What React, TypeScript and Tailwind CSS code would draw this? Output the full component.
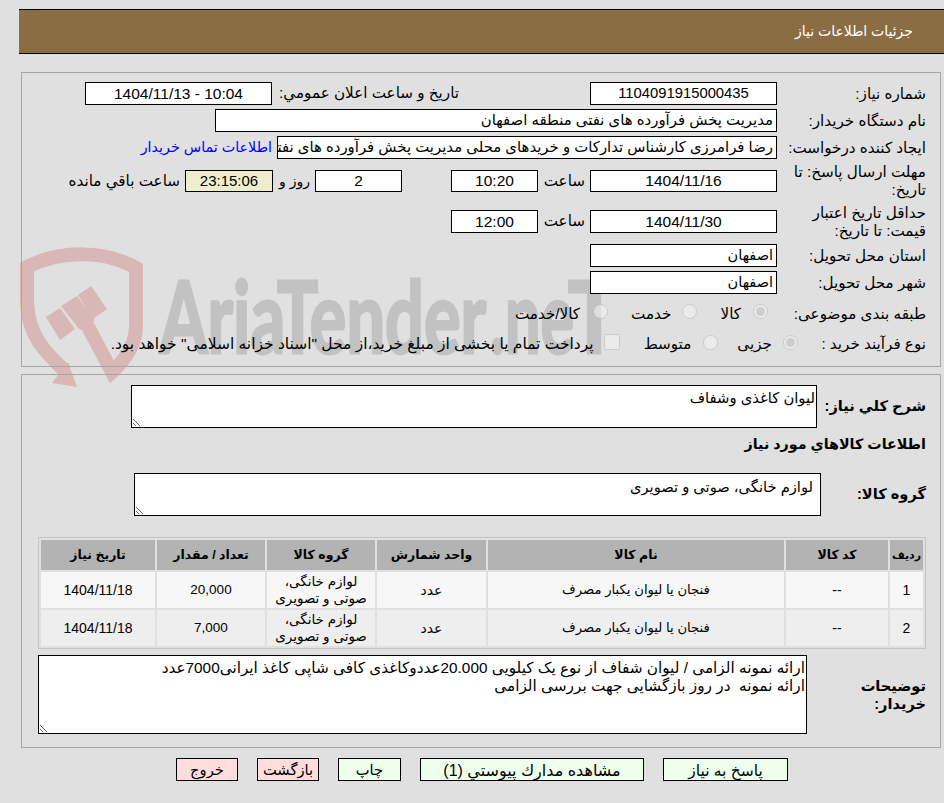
import React from 'react';

const Box: React.FC<{ className?: string; children?: React.ReactNode }> = ({ className = '', children }) => (
  <div className={`h-full shrink-0 border border-black bg-white text-[15.5px] flex items-center overflow-hidden whitespace-nowrap ${className}`}>
    {children}
  </div>
);

const Label: React.FC<{ children: React.ReactNode }> = ({ children }) => (
  <div className="w-[149px] shrink-0 leading-[18px]">{children}</div>
);

const NoteArea: React.FC<{ value: string; className?: string }> = ({ value, className = '' }) => (
  <textarea
    readOnly
    dir="rtl"
    value={value}
    className={`block shrink-0 border border-black bg-white text-black pb-0 leading-[18px] outline-none ${className}`}
  />
);

const Watermark = () => (
  <svg className="absolute left-0 top-[240px]" width="640" height="160" viewBox="0 240 640 160">
    <g fill="none" stroke="#d9b7b7" strokeWidth="14">
      <path d="M66 372 C45 352 27 335 27 300 L27 267 C60 250 105 250 136 268 L136 325 C136 345 125 360 112 372 L86 323" />
    </g>
    <g fill="#d9b7b7">
      <polygon points="46,317 60,308 75,329 60,340" />
      <polygon points="61,306 77,296 95,320 80,330" />
      <polygon points="78,295 91,286 107,309 93,319" />
      <polygon points="52,383 77,387 68,362" />
    </g>
    <g direction="ltr" textAnchor="start" fontFamily="Lato, sans-serif" fontWeight="700" fontSize="100" fill="#c2c2c2" stroke="#c2c2c2" strokeWidth="3">
      <text x="160" y="353" textLength="326" lengthAdjust="spacingAndGlyphs">AriaTender</text>
      <text x="490" y="353" textLength="84" lengthAdjust="spacingAndGlyphs">.ne</text>
      <text x="568" y="353" textLength="52" lengthAdjust="spacingAndGlyphs">T</text>
    </g>
  </svg>
);

const rows = [
  { id: 1, qty: '20,000', bg: 'bg-[#f7f7f7]' },
  { id: 2, qty: '7,000', bg: 'bg-[#eeeeee]' },
];

const description =
  'ارائه نمونه الزامی / لیوان شفاف از نوع یک کیلویی 20.000عددوکاغذی کافی شاپی کاغذ ایرانی7000عدد\nارائه نمونه  در روز بازگشایی جهت بررسی الزامی';

export default function App() {
  return (
    <div dir="rtl" className="relative min-h-[803px] overflow-hidden bg-[#e0e0e0] text-[15.2px] text-black font-['Liberation_Sans','DejaVu_Sans',sans-serif] pt-[9px]">
      <Watermark />

      <div className="relative ml-[19px] h-[45px] border-y border-black bg-[#8b6d43] flex items-center pr-[31px] text-[14px] text-white">
        جزئیات اطلاعات نیاز
      </div>

      <section className="relative ml-[21px] mr-[3px] mt-[18px] h-[295px] border border-[#a6a6a6] pr-[14px] pt-[9px]">
        <div className="flex items-center h-[23px]">
          <Label>شماره نیاز:</Label>
          <Box className="w-[187px] justify-center !text-[14.8px]">1104091915000435</Box>
          <div className="w-[318px] shrink-0 pr-[131px] whitespace-nowrap">تاریخ و ساعت اعلان عمومي:</div>
          <Box className="w-[187px] justify-center"><span dir="ltr">1404/11/13 - 10:04</span></Box>
        </div>
        <div className="flex items-center h-[23px] mt-[4px]">
          <Label>نام دستگاه خریدار:</Label>
          <Box className="w-[562px] px-[3px] !text-[14.9px]">مدیریت پخش فرآورده های نفتی منطقه اصفهان</Box>
        </div>
        <div className="flex items-center h-[23px] mt-[4px]">
          <Label>ایجاد کننده درخواست:</Label>
          <Box className="w-[500px] px-[3px] !text-[14.9px]">رضا فرامرزی کارشناس تدارکات و خریدهای محلی مدیریت پخش فرآورده های نفتی منطقه اصفهان</Box>
          <a className="mr-[5px] whitespace-nowrap text-[14.3px] text-[#0000ff]">اطلاعات تماس خریدار</a>
        </div>
        <div className="flex items-center h-[22px] mt-[11px]">
          <Label>مهلت ارسال پاسخ: تا تاریخ:</Label>
          <Box className="w-[187px] justify-center">1404/11/16</Box>
          <div className="w-[52px] shrink-0 pr-[5px]">ساعت</div>
          <Box className="w-[87px] justify-center">10:20</Box>
          <div className="w-[49px] shrink-0" />
          <Box className="w-[87px] justify-center">2</Box>
          <div className="w-[42px] shrink-0 pr-[5px] whitespace-nowrap text-[14px]">روز و</div>
          <Box className="w-[88px] justify-center !bg-[#eeeecc] !text-[15px]">23:15:06</Box>
          <div className="mr-[5px] whitespace-nowrap">ساعت باقي مانده</div>
        </div>
        <div className="flex items-center h-[23px] mt-[18px]">
          <Label>حداقل تاریخ اعتبار قیمت: تا تاریخ:</Label>
          <Box className="w-[187px] justify-center">1404/11/30</Box>
          <div className="w-[52px] shrink-0 pr-[5px]">ساعت</div>
          <Box className="w-[87px] justify-center">12:00</Box>
        </div>
        <div className="flex items-center h-[23px] mt-[11px]">
          <Label>استان محل تحویل:</Label>
          <Box className="w-[187px] px-[3px] !text-[14.5px]">اصفهان</Box>
        </div>
        <div className="flex items-center h-[23px] mt-[4px]">
          <Label>شهر محل تحویل:</Label>
          <Box className="w-[187px] px-[3px] !text-[14.5px]">اصفهان</Box>
        </div>
        <div className="flex items-center h-[22px] mt-[9px]">
          <Label>طبقه بندی موضوعی:</Label>
          <input type="radio" disabled defaultChecked className="m-0 mr-[9px] mb-[6px] w-[15px] h-[15px] opacity-80" />
          <span className="mr-[12px]">کالا</span>
          <input type="radio" disabled className="m-0 mr-[23px] mb-[6px] w-[15px] h-[15px] opacity-80" />
          <span className="mr-[11px]">خدمت</span>
          <input type="radio" disabled className="m-0 mr-[23px] mb-[6px] w-[15px] h-[15px] opacity-80" />
          <span className="mr-[13px] whitespace-nowrap">کالا/خدمت</span>
        </div>
        <div className="flex items-center h-[22px] mt-[8px]">
          <Label>نوع فرآیند خرید :</Label>
          <input type="radio" disabled defaultChecked className="m-0 mr-[-21px] mb-[4px] w-[15px] h-[15px] opacity-80" />
          <span className="mr-[11px]">جزیی</span>
          <input type="radio" disabled className="m-0 mr-[19px] mb-[4px] w-[15px] h-[15px] opacity-80" />
          <span className="mr-[12px]">متوسط</span>
          <input type="checkbox" disabled className="m-0 mr-[24px] mb-[4px] w-[16px] h-[16px] opacity-80" />
          <span className="mr-[10px] whitespace-nowrap text-[15.5px]">پرداخت تمام یا بخشی از مبلغ خرید،از محل "اسناد خزانه اسلامی" خواهد بود.</span>
        </div>
      </section>

      <section className="relative ml-[21px] mr-[3px] mt-[7px] h-[374px] border border-[#a6a6a6] pr-[14px] pt-[10px]">
        <div className="flex items-center">
          <div className="w-[109px] shrink-0 font-bold text-[14.6px]">شرح كلي نياز:</div>
          <NoteArea value="لیوان کاغذی وشفاف" className="w-[686px] h-[43px] px-[1px] pt-[3px] text-[14.8px]" />
        </div>
        <div className="font-bold text-[14.3px] mt-[5px] h-[22px] leading-[22px]">اطلاعات كالاهاي مورد نياز</div>
        <div className="flex items-center mt-[18px]">
          <div className="w-[105px] shrink-0 font-bold text-[14.6px]">گروه کالا:</div>
          <NoteArea value="لوازم خانگی، صوتی و تصویری" className="w-[687px] h-[43px] px-[7px] pt-[4px] text-[14.7px]" />
        </div>
        <table className="mt-[21px] w-[888px] table-fixed border-separate border-spacing-[2px] border border-[#c4c4c4] text-center text-[14px]">
          <colgroup>
            <col className="w-[33px]" />
            <col className="w-[102px]" />
            <col className="w-[296px]" />
            <col className="w-[109px]" />
            <col className="w-[108px]" />
            <col className="w-[108px]" />
            <col className="w-[114px]" />
          </colgroup>
          <thead>
            <tr className="h-[30px] bg-[#b3b3b3] text-[12.5px] font-bold">
              <th className="text-[11px] whitespace-nowrap">ردیف</th>
              <th>کد کالا</th>
              <th>نام کالا</th>
              <th>واحد شمارش</th>
              <th>گروه کالا</th>
              <th>تعداد / مقدار</th>
              <th>تاریخ نیاز</th>
            </tr>
          </thead>
          <tbody>
            {rows.map(r => (
              <tr key={r.id} className={`h-[36px] ${r.bg}`}>
                <td>{r.id}</td>
                <td>--</td>
                <td className="text-[13.2px]">فنجان یا لیوان یکبار مصرف</td>
                <td className="text-[14px]">عدد</td>
                <td className="leading-[17px] text-[13.5px]">لوازم خانگی، صوتی و تصویری</td>
                <td className="text-[13.5px]">{r.qty}</td>
                <td>1404/11/18</td>
              </tr>
            ))}
          </tbody>
        </table>
        <div className="flex items-center mt-[6px]">
          <div className="w-[119px] shrink-0 font-bold text-[14.6px] leading-[18px]">توضیحات خریدار:</div>
          <NoteArea value={description} className="w-[769px] h-[79px] px-[1px] pt-[3px] text-[15.3px]" />
        </div>
      </section>

      <div className="relative mt-[10px] flex gap-[19px] pr-[156px] text-[14.7px]">
        <button className="w-[125px] h-[23px] border border-black bg-[#eeffee] text-[15.5px]">پاسخ به نیاز</button>
        <button className="w-[224px] h-[23px] border border-black bg-[#eeffee] text-[16px]">مشاهده مدارك پيوستي (1)</button>
        <button className="w-[63px] h-[23px] border border-black bg-[#eeffee]">چاپ</button>
        <button className="w-[62px] h-[23px] border border-black bg-[#ffdddd]">بازگشت</button>
        <button className="w-[62px] h-[23px] border border-black bg-[#ffdddd]">خروج</button>
      </div>
    </div>
  );
}
